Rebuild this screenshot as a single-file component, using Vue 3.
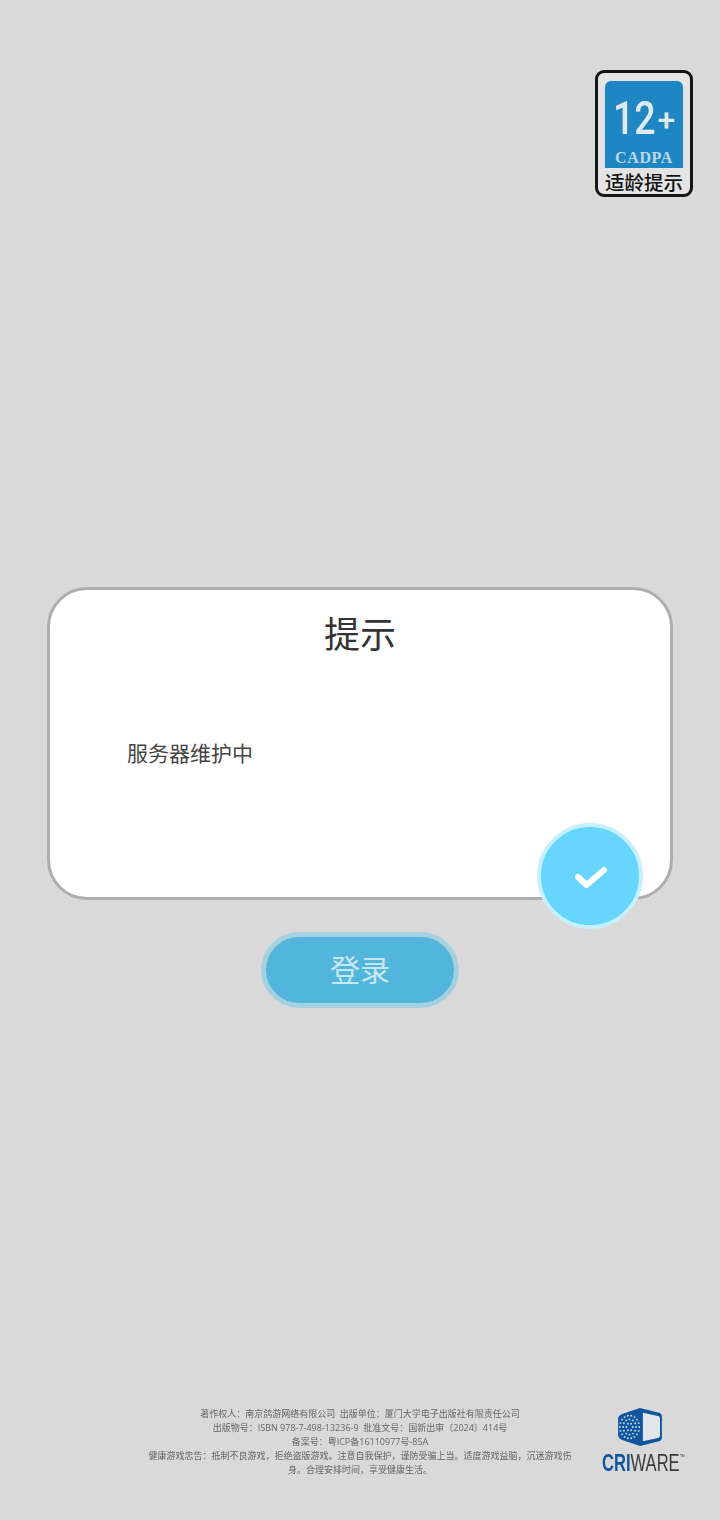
<template>
  <div class="page">
    <div class="age-row">
      <div class="age-badge">
        <div class="age-blue">
          <div class="age-num"><span class="age-twelve">12</span><span class="age-plus">+</span></div>
          <div class="age-org">CADPA</div>
        </div>
        <div class="age-text">适龄提示</div>
      </div>
    </div>

    <div class="dialog">
      <h2 class="dialog-title">提示</h2>
      <p class="dialog-msg">服务器维护中</p>
      <button class="ok-btn">
        <svg width="36" height="28" viewBox="0 0 36 28">
          <path d="M6 15 L14.500 23 L32 8" fill="none" stroke="#fff" stroke-width="6" stroke-linecap="round" stroke-linejoin="round" />
        </svg>
      </button>
    </div>

    <button class="login-btn">登录</button>

    <div class="footer">
      <div class="legal">
        <p v-for="line in legal" :key="line">{{ line }}</p>
      </div>
      <div class="cri">
        <svg width="48" height="40" viewBox="0 0 48 42">
          <path d="M24 1 L44 6 Q47 7 47 10 L47 32 Q47 35 44 36 L24 41 L6 35 Q1 33 1 30 L1 12 Q1 9 6 7 Z" fill="#12559f" />
          <path d="M27 6 L43 9.500 Q45 10 45 12 L45 30 Q45 32 43 32.500 L27 36 Z" fill="#dfe6ec" />
          <g fill="#c9d9ea">
            <circle v-for="d in dots" :key="d.id" :cx="d.x" :cy="d.y" :r="d.r" />
          </g>
        </svg>
        <div class="cri-name"><b>CRI</b><span>WARE</span><i>™</i></div>
      </div>
    </div>
  </div>
</template>

<script setup>
const legal = [
  '著作权人：南京鸽游网络有限公司  出版单位：厦门大学电子出版社有限责任公司',
  '出版物号：ISBN 978-7-498-13236-9  批准文号：国新出审〔2024〕414号',
  '备案号：粤ICP备16110977号-85A',
  '健康游戏忠告：抵制不良游戏，拒绝盗版游戏。注意自我保护，谨防受骗上当。适度游戏益脑，沉迷游戏伤身。合理安排时间，享受健康生活。'
]

// dotted sphere on the CRIWARE cube
const dots = []
for (let ring = 1; ring <= 3; ring++) {
  const count = ring * 6
  for (let i = 0; i < count; i++) {
    const a = (i / count) * Math.PI * 2
    dots.push({
      id: ring + '-' + i,
      x: 13 + Math.cos(a) * ring * 3.4,
      y: 21 + Math.sin(a) * ring * 4,
      r: 1
    })
  }
}
</script>

<style>
html,
body {
  margin: 0;
  background: #d9d9d9;
}
</style>

<style scoped>
.page {
  width: 720px;
  height: 1520px;
  box-sizing: border-box;
  padding-top: 70px;
  display: flex;
  flex-direction: column;
  align-items: center;
  background: #d9d9d9;
  font-family: "Noto Sans CJK SC", "Noto Sans", sans-serif;
}
.age-row {
  width: 100%;
  display: flex;
  justify-content: flex-end;
  padding-right: 27px;
  box-sizing: border-box;
}
.age-badge {
  width: 98px;
  height: 127px;
  box-sizing: border-box;
  border: 3px solid #151515;
  border-radius: 9px;
  background: #e4e4e4;
  padding: 8px 7px 0;
}
.age-blue {
  height: 87px;
  background: #1f86c4;
  border-radius: 6px 6px 0 0;
  display: flex;
  flex-direction: column;
  align-items: center;
}
.age-num {
  margin-top: 12px;
  height: 50px;
  display: flex;
  align-items: center;
  color: #dfeaf0;
  font-family: Roboto, sans-serif;
  line-height: 50px;
}
.age-twelve {
  display: inline-block;
  width: 44px;
  font-size: 47px;
  font-weight: 500;
  transform: scaleX(0.8);
  transform-origin: left center;
}
.age-plus {
  font-size: 32px;
  font-weight: 500;
  margin: 3px 0 0 1px;
}
.age-org {
  margin-top: 7px;
  color: #bcd8e6;
  font-family: "Liberation Serif", serif;
  font-weight: 700;
  font-size: 16px;
  letter-spacing: 0.6px;
  line-height: 16px;
}
.age-text {
  margin: 2px -4px 0;
  text-align: center;
  color: #111;
  font-size: 19.5px;
  font-weight: 500;
  line-height: 24px;
  white-space: nowrap;
}
.dialog {
  position: relative;
  margin-top: 390px;
  width: 626px;
  height: 313px;
  box-sizing: border-box;
  border: 3px solid #aeaeae;
  border-radius: 40px;
  background: #fff;
}
.dialog-title {
  margin: 15px 0 0;
  text-align: center;
  color: #333;
  font-size: 36px;
  font-weight: 400;
  line-height: 54px;
}
.dialog-msg {
  margin: 77px 0 0 77px;
  color: #444;
  font-size: 21px;
  line-height: 32px;
}
.ok-btn {
  position: absolute;
  left: 487px;
  top: 233px;
  width: 106px;
  height: 106px;
  box-sizing: border-box;
  padding: 0;
  border: 4px solid #c6efff;
  border-radius: 50%;
  background: #66d6ff;
  display: flex;
  align-items: center;
  justify-content: center;
}
.login-btn {
  margin-top: 32px;
  width: 198px;
  height: 76px;
  box-sizing: border-box;
  padding: 0 0 4px;
  border: 5px solid #a4d0e0;
  border-radius: 38px;
  background: #52b6dc;
  color: #c7e7f2;
  font-family: inherit;
  font-size: 30px;
  line-height: 1;
}
.footer {
  margin-top: auto;
  margin-bottom: 47px;
  width: 100%;
  height: 66px;
  display: grid;
  grid-template-columns: 146px 428px 1fr;
}
.legal {
  grid-column: 2;
  color: #666;
  font-family: "Open Sans", "Noto Sans CJK SC", sans-serif;
  font-size: 9px;
  line-height: 14px;
  text-align: center;
  white-space: pre-wrap;
  filter: blur(0.3px);
}
.legal p {
  margin: 0;
}
.cri {
  grid-column: 3;
  margin-left: 25px;
  width: 84px;
  display: flex;
  flex-direction: column;
  align-items: center;
}
.cri svg {
  display: block;
  margin-right: 2px;
}
.cri-name {
  margin-top: 4px;
  margin-left: 4px;
  display: flex;
  align-items: flex-start;
  font-family: "Liberation Sans", sans-serif;
  font-size: 23px;
  line-height: 24px;
  white-space: nowrap;
  transform: scaleX(0.72);
}
.cri-name b {
  color: #12559f;
}
.cri-name span {
  color: #3a3a3a;
}
.cri-name i {
  font-size: 7px;
  line-height: 12px;
  font-style: normal;
  color: #3a3a3a;
}
</style>
